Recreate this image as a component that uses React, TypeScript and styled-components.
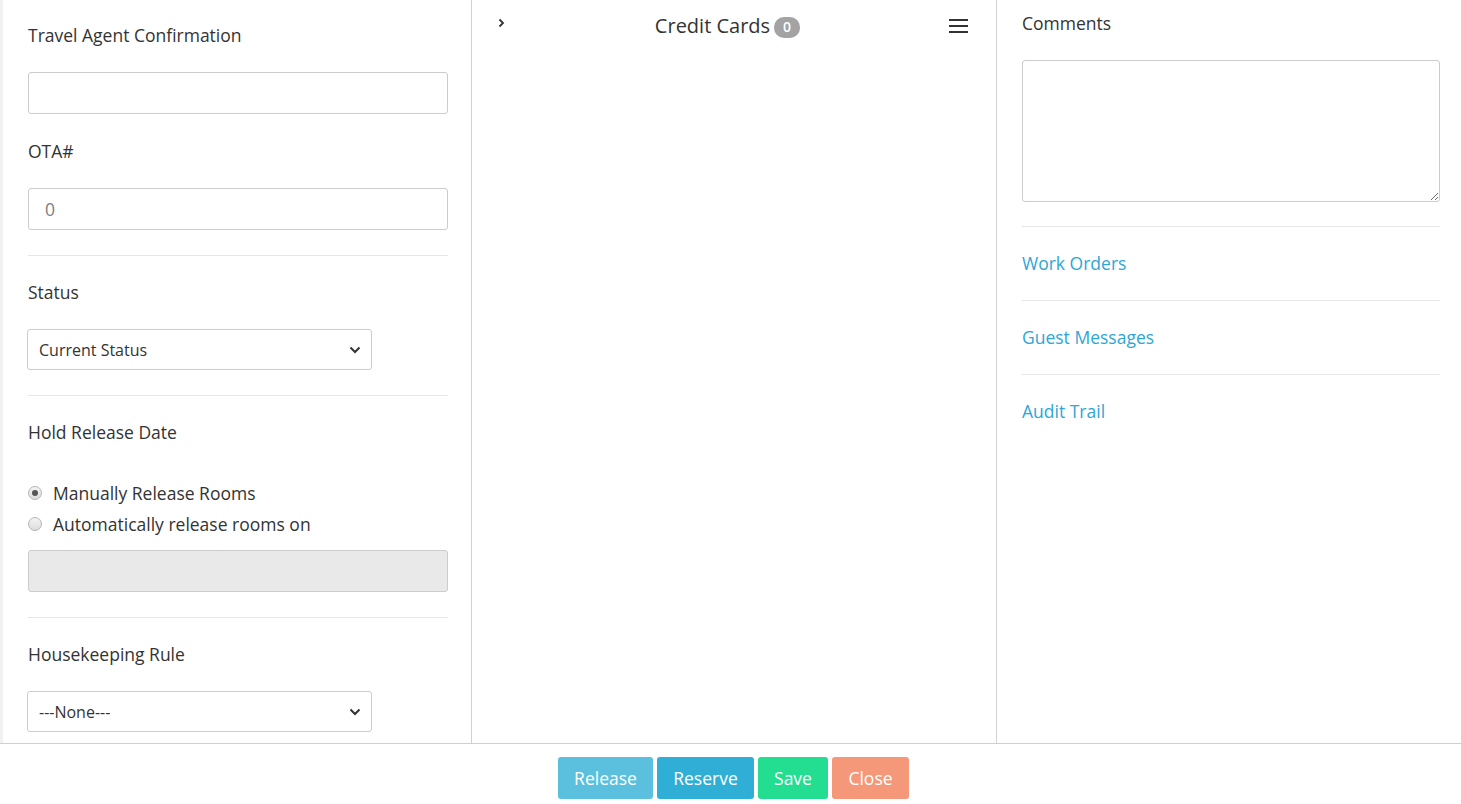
import React from "react";
import styled, { createGlobalStyle } from "styled-components";

const Global = createGlobalStyle`
  html, body { margin: 0; padding: 0; background: #fff; }
  body { font-family: "Open Sans", "Liberation Sans", sans-serif; color: #333; }
  * { box-sizing: border-box; }
`;

const Page = styled.div`
  display: flex;
  flex-direction: column;
  width: 1461px;
  height: 804px;
  overflow: hidden;
`;

const Columns = styled.div`
  display: grid;
  grid-template-columns: 472px 525px 1fr;
  height: 744px;
  border-bottom: 1px solid #cfcfcf;
`;

const LeftCol = styled.div`
  border-left: 3px solid #f1f1f1;
  border-right: 1px solid #d2d2d2;
  padding: 23px 23px 0 25px;
  overflow: hidden;
`;

const MidCol = styled.div`
  border-right: 1px solid #d2d2d2;
`;

const RightCol = styled.div`
  padding: 11px 21px 0 25px;
`;

const Label = styled.div`
  font-size: 17.5px;
  line-height: 24px;
  color: #333;
  margin-bottom: 25px;
`;

const Group = styled.div<{ $last?: boolean }>`
  margin-bottom: ${(p) => (p.$last ? "0" : "25px")};
`;

const Input = styled.input<{ $disabled?: boolean }>`
  display: block;
  width: 100%;
  height: 42px;
  border: 1px solid #cccccc;
  border-radius: 3px;
  padding: 0 16px;
  font-family: inherit;
  font-size: 17.5px;
  color: #555;
  background: ${(p) => (p.$disabled ? "#e9e9e9" : "#fff")};
  outline: none;
  &::placeholder { color: #808080; }
`;

const Divider = styled.hr`
  border: 0;
  border-top: 1px solid #e6e6e6;
  margin: 0 0 24px 0;
  height: 0;
`;

const SelectBox = styled.div`
  display: flex;
  align-items: center;
  justify-content: space-between;
  width: 345px;
  height: 41px;
  margin-left: -1px;
  border: 1px solid #cccccc;
  border-radius: 3px;
  padding: 0 10px 0 11px;
  font-size: 16px;
  color: #333;
  background: #fff;
`;

const RadioList = styled.div`
  display: flex;
  flex-direction: column;
  gap: 7px;
  padding-top: 12px;
  margin-bottom: 14px;
`;

const RadioRow = styled.label`
  display: flex;
  align-items: center;
  gap: 11px;
  font-size: 17.5px;
  line-height: 24px;
  color: #333;
`;

const RadioDot = styled.span<{ $checked?: boolean }>`
  width: 14px;
  height: 14px;
  border-radius: 50%;
  border: 1px solid #b5b5b5;
  background: linear-gradient(#f4f4f4, #dcdcdc);
  display: flex;
  align-items: center;
  justify-content: center;
  &::after {
    content: "";
    width: 6px;
    height: 6px;
    border-radius: 50%;
    background: ${(p) => (p.$checked ? "#555" : "transparent")};
  }
`;

const Header = styled.div`
  display: flex;
  align-items: flex-start;
  padding: 12px 27px 0 26px;
`;

const Chevron = styled.span`
  width: 8px;
  padding-top: 6px;
  display: flex;
`;

const Title = styled.div`
  flex: 1;
  display: flex;
  align-items: center;
  justify-content: center;
  gap: 4px;
  font-size: 20px;
  line-height: 28px;
  color: #333;
`;

const Badge = styled.span`
  display: inline-flex;
  align-items: center;
  justify-content: center;
  min-width: 26px;
  height: 21px;
  border-radius: 10px;
  background: #a3a3a3;
  color: #fff;
  font-size: 14px;
  font-weight: 600;
  padding: 0 8px;
  margin-top: 2px;
`;

const Burger = styled.span`
  width: 20px;
  padding-top: 7px;
  display: flex;
`;

const TextArea = styled.textarea`
  display: block;
  width: 100%;
  height: 142px;
  border: 1px solid #cccccc;
  border-radius: 3px;
  resize: vertical;
  font-family: inherit;
  font-size: 15px;
  outline: none;
  margin-bottom: 24px;
`;

const LinkRow = styled.div`
  border-top: 1px solid #e6e6e6;
  padding: 24px 0 25px;
  font-size: 17.5px;
  line-height: 24px;
`;

const LinkText = styled.a`
  color: #2ea6d6;
  text-decoration: none;
  cursor: pointer;
`;

const Footer = styled.div`
  display: flex;
  justify-content: center;
  gap: 4px;
  padding: 13px 0 0 6px;
`;

const Button = styled.button<{ $bg: string; $w: number }>`
  width: ${(p) => p.$w}px;
  height: 42px;
  border: 0;
  border-radius: 3px;
  background: ${(p) => p.$bg};
  color: #fff;
  font-family: inherit;
  font-size: 17.5px;
  padding: 0;
  cursor: pointer;
`;

const ChevronDown = () => (
  <svg width="12" height="8" viewBox="0 0 12 8">
    <polyline points="1.5,1.5 6,6 10.5,1.5" fill="none" stroke="#333" strokeWidth="2" />
  </svg>
);

export default function App() {
  return (
    <Page>
      <Global />
      <Columns>
        <LeftCol>
          <Label>Travel Agent Confirmation</Label>
          <Group>
            <Input />
          </Group>
          <Label>OTA#</Label>
          <Group>
            <Input placeholder="0" />
          </Group>
          <Divider />
          <Label>Status</Label>
          <Group>
            <SelectBox>
              <span>Current Status</span>
              <ChevronDown />
            </SelectBox>
          </Group>
          <Divider />
          <Label>Hold Release Date</Label>
          <RadioList>
            <RadioRow>
              <RadioDot $checked />
              Manually Release Rooms
            </RadioRow>
            <RadioRow>
              <RadioDot />
              Automatically release rooms on
            </RadioRow>
          </RadioList>
          <Group>
            <Input $disabled disabled />
          </Group>
          <Divider />
          <Label>Housekeeping Rule</Label>
          <Group $last>
            <SelectBox>
              <span>---None---</span>
              <ChevronDown />
            </SelectBox>
          </Group>
        </LeftCol>
        <MidCol>
          <Header>
            <Chevron>
              <svg width="7" height="10" viewBox="0 0 7 10">
                <polyline points="1.5,1.5 5,5 1.5,8.5" fill="none" stroke="#333" strokeWidth="1.8" />
              </svg>
            </Chevron>
            <Title>
              Credit Cards <Badge>0</Badge>
            </Title>
            <Burger>
              <svg width="20" height="14" viewBox="0 0 20 14">
                <rect x="0" y="0" width="19" height="2" fill="#333" />
                <rect x="0" y="6" width="19" height="2" fill="#333" />
                <rect x="0" y="12" width="19" height="2" fill="#333" />
              </svg>
            </Burger>
          </Header>
        </MidCol>
        <RightCol>
          <Label>Comments</Label>
          <TextArea />
          <LinkRow>
            <LinkText>Work Orders</LinkText>
          </LinkRow>
          <LinkRow>
            <LinkText>Guest Messages</LinkText>
          </LinkRow>
          <LinkRow>
            <LinkText>Audit Trail</LinkText>
          </LinkRow>
        </RightCol>
      </Columns>
      <Footer>
        <Button $bg="#5bc0de" $w={95}>Release</Button>
        <Button $bg="#2fafd6" $w={97}>Reserve</Button>
        <Button $bg="#23dd90" $w={70}>Save</Button>
        <Button $bg="#f5987a" $w={77}>Close</Button>
      </Footer>
    </Page>
  );
}
